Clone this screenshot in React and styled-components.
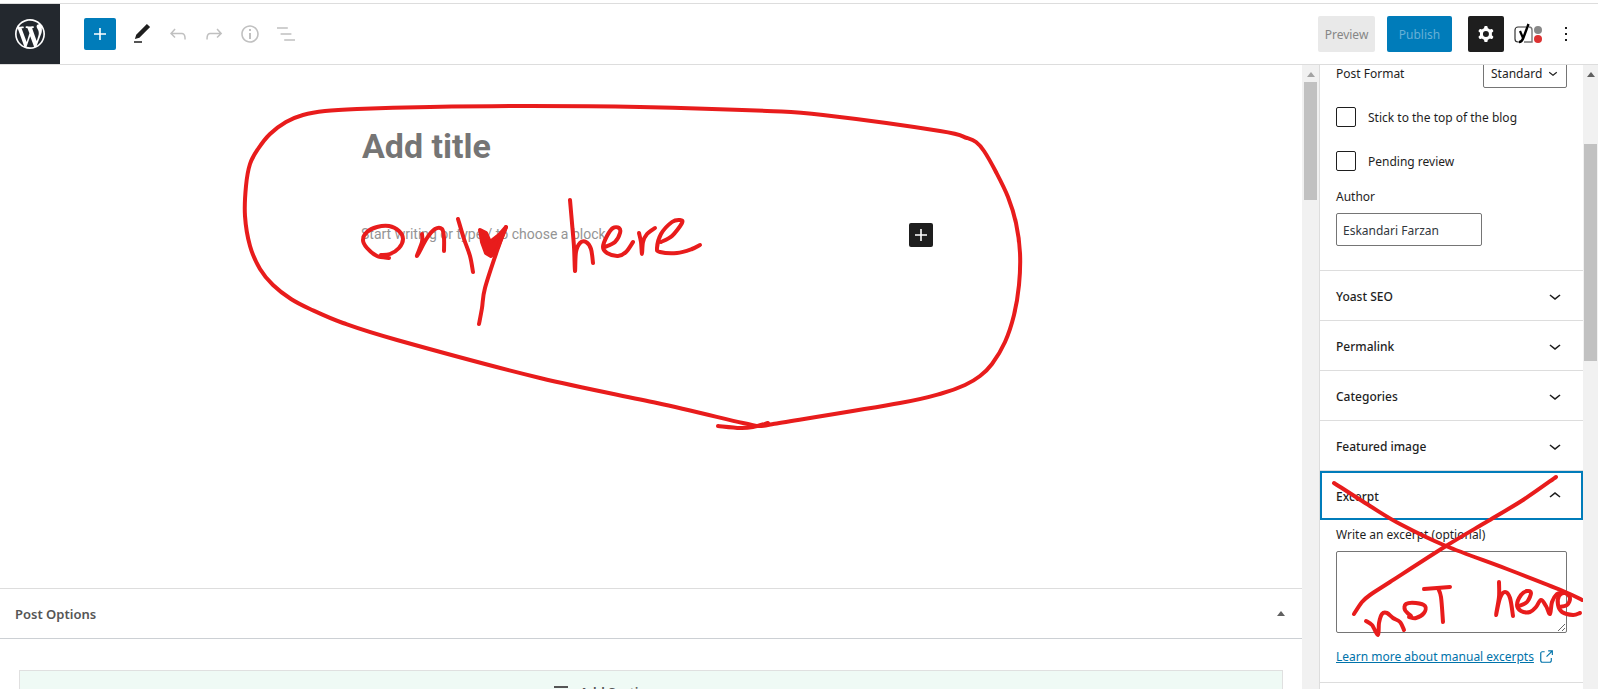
import React from 'react'
import styled, { createGlobalStyle } from 'styled-components'

const icons = {
    wordpress: "M20 10c0-5.51-4.49-10-10-10C4.48 0 0 4.49 0 10c0 5.52 4.48 10 10 10 5.51 0 10-4.48 10-10zM7.78 15.37L4.37 6.22c.55-.02 1.17-.08 1.17-.08.5-.06.44-1.13-.06-1.11 0 0-1.45.11-2.37.11-.18 0-.37 0-.58-.01C4.12 2.69 6.87 1.11 10 1.11c2.33 0 4.45.87 6.05 2.34-.68-.11-1.65.39-1.65 1.58 0 .74.45 1.36.9 2.1.35.61.55 1.36.55 2.46 0 1.49-1.4 5-1.4 5l-3.03-8.37c.54-.02.82-.17.82-.17.5-.05.44-1.25-.06-1.22 0 0-1.44.12-2.38.12-.87 0-2.33-.12-2.33-.12-.5-.03-.56 1.2-.06 1.22l.92.08 1.26 3.41zM17.41 10c.24-.64.74-1.87.43-4.25.7 1.29 1.05 2.71 1.05 4.25 0 3.29-1.73 6.24-4.4 7.78.97-2.59 1.94-5.2 2.92-7.78zM6.1 18.09C3.12 16.65 1.11 13.53 1.11 10c0-1.3.23-2.48.72-3.59C3.25 10.3 4.67 14.2 6.1 18.09zm4.03-6.63l2.58 6.98c-.86.29-1.76.45-2.71.45-.79 0-1.57-.11-2.29-.33.81-2.38 1.62-4.74 2.42-7.1z",
    plus: "M18 11.2h-5.2V6h-1.6v5.2H6v1.6h5.2V18h1.6v-5.2H18z",
    edit: "M20.1 5.1L16.9 2 6.2 12.7l-1.3 4.4 4.5-1.3L20.1 5.1zM4 20.8h8v-1.5H4v1.5z",
    undo: "M18.3 11.7c-.6-.6-1.4-.9-2.3-.9H6.7l2.9-3.3-1.1-1-4.5 5L8.5 16l1-1-2.7-2.7H16c.5 0 .9.2 1.3.5 1 1 1 3.4 1 4.5v.3h1.5v-.2c0-1.5 0-4.3-1.5-5.7z",
    redo: "M15.6 6.5l-1.1 1 2.9 3.3H8c-.9 0-1.7.3-2.3.9-1.4 1.5-1.4 4.2-1.4 5.6v.2h1.5v-.3c0-1.1 0-3.5 1-4.5.3-.3.7-.5 1.3-.5h9.2L14.5 15l1.1 1.1 4.6-4.6-4.6-5z",
    info: "M12 3.2c-4.8 0-8.8 3.9-8.8 8.8 0 4.8 3.9 8.8 8.8 8.8 4.8 0 8.8-3.9 8.8-8.8 0-4.8-4-8.8-8.8-8.8zm0 16c-4 0-7.2-3.3-7.2-7.2C4.8 8 8 4.8 12 4.8s7.2 3.3 7.2 7.2c0 4-3.2 7.2-7.2 7.2zM11 17h2v-6h-2v6zm0-8h2V7h-2v2z",
    list: "M13.8 5.2H3v1.5h10.8V5.2zm-3.6 12v1.5H21v-1.5H10.2zm7.2-6H6.6v1.5h10.8v-1.5z",
    cog: "M10.289 4.836A1 1 0 0111.275 4h1.306a1 1 0 01.987.836l.244 1.466c.787.26 1.503.679 2.108 1.218l1.393-.522a1 1 0 011.216.437l.653 1.13a1 1 0 01-.23 1.273l-1.148.944a6.025 6.025 0 010 2.435l1.149.946a1 1 0 01.23 1.272l-.653 1.13a1 1 0 01-1.216.437l-1.394-.522c-.605.54-1.32.958-2.108 1.218l-.244 1.466a1 1 0 01-.987.836h-1.306a1 1 0 01-.986-.836l-.244-1.466a5.995 5.995 0 01-2.108-1.218l-1.394.522a1 1 0 01-1.217-.436l-.653-1.131a1 1 0 01.23-1.272l1.149-.946a6.026 6.026 0 010-2.435l-1.148-.944a1 1 0 01-.23-1.272l.653-1.131a1 1 0 011.217-.437l1.393.522a5.994 5.994 0 012.108-1.218l.244-1.466zM14.929 12a3 3 0 11-6 0 3 3 0 016 0z",
    more: "M13 19h-2v-2h2v2zm0-6h-2v-2h2v2zm0-6h-2V5h2v2z",
    down: "M17.5 11.6L12 16l-5.5-4.4.9-1.2L12 14l4.5-3.6 1 1.2z",
    up: "M6.5 12.4L12 8l5.5 4.4-.9 1.2L12 10l-4.5 3.6-1-1.2z",
    external: "M18.2 17c0 .7-.6 1.2-1.2 1.2H7c-.7 0-1.2-.6-1.2-1.2V7c0-.7.6-1.2 1.2-1.2h3.2V4.2H7C5.5 4.2 4.2 5.5 4.2 7v10c0 1.5 1.2 2.8 2.8 2.8h10c1.5 0 2.8-1.2 2.8-2.8v-3.6h-1.5V17zM14.9 3v1.5h3.7l-6.4 6.4 1.1 1.1 6.4-6.4v3.7h1.5V3h-6.3z"
}

const Icon = ({ name, size = 24, box = "0 0 24 24" }) => (
    <svg width={size} height={size} viewBox={box} fill="currentColor" fillRule="evenodd" aria-hidden="true">
        <path d={icons[name]} />
    </svg>
)

const YoastIcon = () => (
    <svg width="28" height="22" viewBox="0 0 28 22" aria-hidden="true">
        <path d="M12 4H4a3 3 0 0 0-3 3v9a3 3 0 0 0 3 3h2" fill="none" stroke="#333" strokeWidth="1.2" />
        <path d="M10 19h8V7a3 3 0 0 0-3-3" fill="none" stroke="#777" strokeWidth="1.4" />
        <path d="M6 8l3 7" fill="none" stroke="#000" strokeWidth="2.2" />
        <path d="M14.5 1L9.500 14.500Q8 19 5 19" fill="none" stroke="#000" strokeWidth="2.4" />
        <circle cx="24" cy="7" r="4" fill="#888" />
        <circle cx="24" cy="16" r="4" fill="#dc3232" />
    </svg>
)

// pen strokes drawn over the editor, as lists of points
const editorStrokes = [
    [[773, 423], [759, 425], [743, 422], [657, 402], [540, 377], [397, 339], [343, 322], [310, 308], [291, 298], [273, 284], [260, 268], [250, 245], [245, 215], [246, 185], [250, 163], [258, 148], [270, 133], [286, 121], [303, 114], [325, 110], [357, 108], [430, 106], [530, 105], [640, 106], [767, 110], [823, 114], [940, 130], [967, 137], [976, 141], [984, 150], [996, 171], [1008, 196], [1016, 222], [1020, 252], [1019, 284], [1014, 314], [1005, 341], [992, 363], [980, 375], [965, 384], [943, 392], [900, 402], [773, 423]],
    [[718, 425], [740, 427], [753, 426], [768, 422]],
    [[389, 257], [377, 255], [367, 247], [363, 239], [367, 231], [377, 226], [389, 225], [399, 230], [403, 238], [399, 247], [390, 253], [381, 254]],
    [[422, 233], [422, 241], [417, 255], [427, 237], [435, 228], [442, 228], [444, 237], [444, 250]],
    [[458, 218], [464, 238], [470, 255], [473, 271]],
    [[506, 226], [498, 247], [485, 287], [482, 307], [479, 323]],
    [[570, 199], [572, 222], [574, 246], [575, 270], [576, 251], [580, 242], [586, 241], [591, 248], [593, 262]],
    [[605, 246], [615, 241], [620, 232], [619, 227], [613, 227], [607, 235], [603, 246], [607, 252], [618, 255], [626, 251], [633, 241]],
    [[639, 232], [641, 241], [642, 253], [643, 241], [647, 233], [655, 227]],
    [[661, 241], [672, 235], [682, 222], [680, 219], [672, 221], [661, 233], [657, 247], [660, 251], [677, 252], [692, 248], [700, 244]]
]

const sidebarStrokes = [
    [[1334, 483], [1370, 506], [1400, 524], [1446, 546], [1507, 569], [1563, 591], [1582, 600]],
    [[1556, 477], [1523, 500], [1488, 521], [1446, 546], [1390, 582], [1370, 595], [1362, 602], [1354, 614]],
    [[1366, 621], [1372, 625], [1378, 635], [1379, 623], [1382, 614], [1387, 613], [1393, 618], [1400, 622], [1404, 630]],
    [[1411, 616], [1405, 610], [1406, 604], [1416, 603], [1425, 606], [1424, 613], [1416, 618], [1409, 617]],
    [[1424, 589], [1450, 587]],
    [[1438, 588], [1441, 597], [1443, 622]],
    [[1499, 582], [1499, 597], [1496, 615], [1500, 598], [1505, 592], [1510, 598], [1513, 616]],
    [[1519, 606], [1527, 602], [1531, 593], [1527, 591], [1521, 595], [1517, 605], [1521, 611], [1530, 612], [1536, 607], [1541, 600], [1546, 606], [1550, 614], [1552, 602], [1557, 594], [1562, 593]],
    [[1559, 607], [1567, 605], [1570, 598], [1565, 593], [1559, 596], [1558, 605], [1562, 612], [1573, 615], [1580, 613]]
]

// runs a smooth curve through the points of one stroke
const strokePath = (points) => points.slice(1).reduce((path, end, i) => {
    const start = points[i]
    const before = points[i - 1] || start
    const after = points[i + 2] || end
    const c1 = [start[0] + (end[0] - before[0]) / 6, start[1] + (end[1] - before[1]) / 6]
    const c2 = [end[0] - (after[0] - start[0]) / 6, end[1] - (after[1] - start[1]) / 6]
    return `${path}C${c1} ${c2} ${end}`
}, `M${points[0]}`)

const Strokes = ({ strokes, origin, width, height, children }) => (
    <Ink width={width} height={height} viewBox={`${origin} ${width} ${height}`} aria-hidden="true">
        {strokes.map((points, i) => <path key={i} d={strokePath(points)} />)}
        {children}
    </Ink>
)

const tools = [
    { name: "edit", label: "Tools" },
    { name: "undo", label: "Undo", disabled: true },
    { name: "redo", label: "Redo", disabled: true },
    { name: "info", label: "Details", disabled: true },
    { name: "list", label: "Outline", disabled: true }
]

const closedPanels = ["Yoast SEO", "Permalink", "Categories", "Featured image"]

export default function App() {
    return (
        <Page>
            <GlobalStyle />
            <Header>
                <Logo href="#" aria-label="View posts"><Icon name="wordpress" size={36} box="-2 -2 24 24" /></Logo>
                <Tools>
                    <InserterButton aria-label="Add block"><Icon name="plus" /></InserterButton>
                    {tools.map(t => <ToolButton key={t.name} aria-label={t.label} disabled={t.disabled}><Icon name={t.name} /></ToolButton>)}
                </Tools>
                <Actions>
                    <TextButton disabled>Preview</TextButton>
                    <TextButton $primary disabled>Publish</TextButton>
                    <Toggles>
                        <ToolButton $active aria-label="Settings"><Icon name="cog" /></ToolButton>
                        <YoastButton aria-label="Yoast SEO"><YoastIcon /></YoastButton>
                        <ToolButton aria-label="Options"><Icon name="more" /></ToolButton>
                    </Toggles>
                </Actions>
            </Header>
            <Body>
                <Main>
                    <Canvas>
                        <Column>
                            <TitleInput aria-label="Add title" placeholder="Add title" />
                            <BlockRow>
                                <BlockInput aria-label="Block text" placeholder="Start writing or type / to choose a block" />
                                <BlockInserter aria-label="Add block"><Icon name="plus" /></BlockInserter>
                            </BlockRow>
                        </Column>
                    </Canvas>
                    <MetaBoxes>
                        <MetaHeader>Post Options <Triangle /></MetaHeader>
                        <SectionBox>
                            <SectionButton><Bars><i /><i /><i /></Bars>Add Section</SectionButton>
                        </SectionBox>
                    </MetaBoxes>
                    <Strokes strokes={editorStrokes} origin="0 64" width={1100} height={420}>
                        <Fill d="M480 229L482 241L486 252L491 255L497 248L506 226L499 234L490 241L486 232Z" />
                    </Strokes>
                </Main>
                <Scrollbar $wide><Triangle $light /><Thumb $top={8} $height={118} /></Scrollbar>
                <Sidebar>
                    <Status>
                        <FormatRow>
                            <label htmlFor="format">Post Format</label>
                            <SelectBox>
                                <select id="format"><option>Standard</option></select>
                                <Icon name="down" size={18} />
                            </SelectBox>
                        </FormatRow>
                        <CheckRow><input type="checkbox" /><span>Stick to the top of the blog</span></CheckRow>
                        <CheckRow><input type="checkbox" /><span>Pending review</span></CheckRow>
                        <AuthorLabel htmlFor="author">Author</AuthorLabel>
                        <AuthorInput id="author" defaultValue="Eskandari Farzan" />
                    </Status>
                    {closedPanels.map(title => <PanelButton key={title}><span>{title}</span><Icon name="down" /></PanelButton>)}
                    <PanelButton $open><span>Excerpt</span><Icon name="up" /></PanelButton>
                    <Excerpt>
                        <label htmlFor="excerpt">Write an excerpt (optional)</label>
                        <ExcerptText id="excerpt" />
                        <Link href="#"><span>Learn more about manual excerpts</span><Icon name="external" size={18} /></Link>
                    </Excerpt>
                    <Strokes strokes={sidebarStrokes} origin="1320 65" width={278} height={620} />
                </Sidebar>
                <Scrollbar><Triangle /><Thumb $top={70} $height={217} /></Scrollbar>
            </Body>
        </Page>
    )
}

const GlobalStyle = createGlobalStyle`
    * {
        box-sizing: border-box;
    }
    body {
        margin: 0;
        background: #fff;
        color: #1e1e1e;
        font: 12px/16px "Noto Sans", "Open Sans", sans-serif;
    }
    button, input, select, textarea {
        font: inherit;
        color: inherit;
    }
    button {
        padding: 0;
        border: 0;
        background: none;
    }
    svg {
        display: block;
        flex: none;
    }
`

const Page = styled.div`
    display: flex;
    flex-direction: column;
    height: 100vh;
    padding-top: 3px;
    overflow: hidden;
`

const Header = styled.header`
    display: flex;
    align-items: center;
    flex: none;
    height: 62px;
    border-top: 1px solid #ddd;
    border-bottom: 1px solid #ddd;
`

const Logo = styled.a`
    display: flex;
    align-items: center;
    justify-content: center;
    width: 60px;
    height: 60px;
    background: #23282e;
    color: #fff;
`

const Tools = styled.div`
    display: flex;
    align-items: center;
    padding-left: 24px;
`

const ToolButton = styled.button`
    display: flex;
    align-items: center;
    justify-content: center;
    width: 36px;
    height: 36px;
    border-radius: 2px;
    background: ${p => p.$active ? "#1e1e1e" : "none"};
    color: ${p => p.$active ? "#fff" : p.disabled ? "#c0c0c0" : "#1e1e1e"};
`

const InserterButton = styled(ToolButton)`
    width: 32px;
    height: 32px;
    margin-right: 8px;
    background: #007cba;
    color: #fff;
`

const YoastButton = styled(ToolButton)`
    width: 40px;
    margin-left: 4px;
`

const Actions = styled.div`
    display: flex;
    align-items: center;
    gap: 12px;
    margin-left: auto;
    padding-right: 14px;
`

const Toggles = styled.div`
    display: flex;
    margin-left: 4px;
`

const TextButton = styled.button`
    height: 36px;
    width: ${p => p.$primary ? "65px" : "57px"};
    padding-top: 2px;
    border-radius: 2px;
    background: ${p => p.$primary ? "#007cba" : "#e9e9e9"};
    color: ${p => p.$primary ? "#66b0d6" : "#868686"};
`

const Body = styled.div`
    display: flex;
    flex: 1;
    min-height: 0;
`

const Main = styled.main`
    position: relative;
    display: flex;
    flex-direction: column;
    flex: 1;
    min-width: 0;
    overflow: hidden;
`

const Canvas = styled.section`
    flex: 1;
    min-height: 0;
    font-family: Roboto, sans-serif;
`

const Column = styled.div`
    max-width: 580px;
    margin: 0 auto;
    padding-top: 57px;
`

const TitleInput = styled.input`
    width: 100%;
    height: 48px;
    padding: 0 1px;
    border: 0;
    outline: none;
    font-size: 34px;
    font-weight: 700;
    &::placeholder {
        color: #757575;
        opacity: 1;
    }
`

const BlockRow = styled.div`
    display: flex;
    align-items: center;
    margin-top: 53px;
    padding-right: 8px;
`

const BlockInput = styled.input`
    flex: 1;
    height: 24px;
    padding: 0 0 2px;
    border: 0;
    outline: none;
    font-size: 14px;
    &::placeholder {
        color: #949494;
        opacity: 1;
    }
`

const BlockInserter = styled(ToolButton)`
    width: 24px;
    height: 24px;
    background: #1e1e1e;
    color: #fff;
`

const MetaBoxes = styled.section`
    flex: none;
    height: 101px;
    border-top: 1px solid #ddd;
`

const MetaHeader = styled.h2`
    display: flex;
    align-items: center;
    justify-content: space-between;
    height: 50px;
    margin: 0;
    padding: 0 17px 0 15px;
    border-bottom: 1px solid #ccd0d4;
    color: #555;
    font-size: 13px;
    font-weight: 600;
`

const Triangle = styled.span`
    border: 4px solid transparent;
    border-top: 0;
    border-bottom: 5px solid ${p => p.$light ? "#a3a3a3" : "#606060"};
`

const SectionBox = styled.div`
    height: 60px;
    margin: 31px 19px 0;
    padding: 13px 0 0 41%;
    border: 1px solid #e0e0e0;
    background: #effaf5;
`

const SectionButton = styled.button`
    display: flex;
    gap: 12px;
    color: #555;
    font-size: 13px;
    font-weight: 600;
`

const Bars = styled.span`
    display: flex;
    flex-direction: column;
    gap: 3px;
    padding-top: 2px;
    i {
        width: 14px;
        height: 2px;
        background: #555;
    }
`

const Scrollbar = styled.div`
    display: flex;
    flex-direction: column;
    align-items: center;
    flex: none;
    width: ${p => p.$wide ? "17px" : "15px"};
    padding-top: 7px;
    background: #f1f1f1;
`

const Thumb = styled.div`
    width: 13px;
    height: ${p => p.$height}px;
    margin-top: ${p => p.$top - 3}px;
    background: #c1c1c1;
`

const Sidebar = styled.aside`
    position: relative;
    flex: none;
    width: 264px;
    border-left: 1px solid #ddd;
    overflow: hidden;
`

const Status = styled.div`
    display: flex;
    flex-direction: column;
    align-items: flex-start;
    margin-top: -8px;
    padding: 0 16px 24px;
`

const FormatRow = styled.div`
    display: flex;
    align-items: center;
    justify-content: space-between;
    width: 100%;
    height: 31px;
    margin-bottom: 7px;
    label {
        padding-top: 2px;
    }
`

const SelectBox = styled.span`
    display: flex;
    align-items: center;
    width: 84px;
    height: 31px;
    border: 1px solid #757575;
    border-radius: 2px;
    select {
        width: 60px;
        padding: 2px 0 0 7px;
        border: 0;
        background: none;
        appearance: none;
    }
`

const CheckRow = styled.label`
    display: flex;
    align-items: center;
    gap: 12px;
    height: 44px;
    input {
        width: 20px;
        height: 20px;
        margin: 0;
        border: 1px solid #1e1e1e;
        border-radius: 2px;
        appearance: none;
    }
    span {
        padding-top: 2px;
    }
`

const AuthorLabel = styled.label`
    margin: 6px 0 8px;
`

const AuthorInput = styled.input`
    width: 146px;
    height: 33px;
    padding: 2px 6px 0;
    border: 1px solid #757575;
    border-radius: 2px;
    color: #32373c;
`

const PanelButton = styled.button`
    display: flex;
    align-items: center;
    justify-content: space-between;
    width: 100%;
    height: 50px;
    padding: 0 16px;
    border-top: 1px solid #ddd;
    font-weight: 500;
    ${p => p.$open && `
        box-shadow: inset 0 0 0 2px #007cba;
    `}
    span {
        padding-top: 2px;
    }
`

const Excerpt = styled.div`
    padding: 7px 16px 16px;
    border-bottom: 1px solid #ddd;
`

const ExcerptText = styled.textarea`
    display: block;
    width: 100%;
    height: 82px;
    margin: 8px 0 15px;
    border: 1px solid #757575;
    border-radius: 2px;
`

const Link = styled.a`
    display: flex;
    align-items: center;
    gap: 3px;
    color: #0073aa;
    text-decoration: none;
    span {
        text-decoration: underline;
    }
`

const Ink = styled.svg`
    position: absolute;
    top: 0;
    left: 0;
    fill: none;
    stroke: #e81c1c;
    stroke-width: 4px;
    stroke-linecap: round;
    stroke-linejoin: round;
    pointer-events: none;
`

const Fill = styled.path`
    fill: #e81c1c;
`
